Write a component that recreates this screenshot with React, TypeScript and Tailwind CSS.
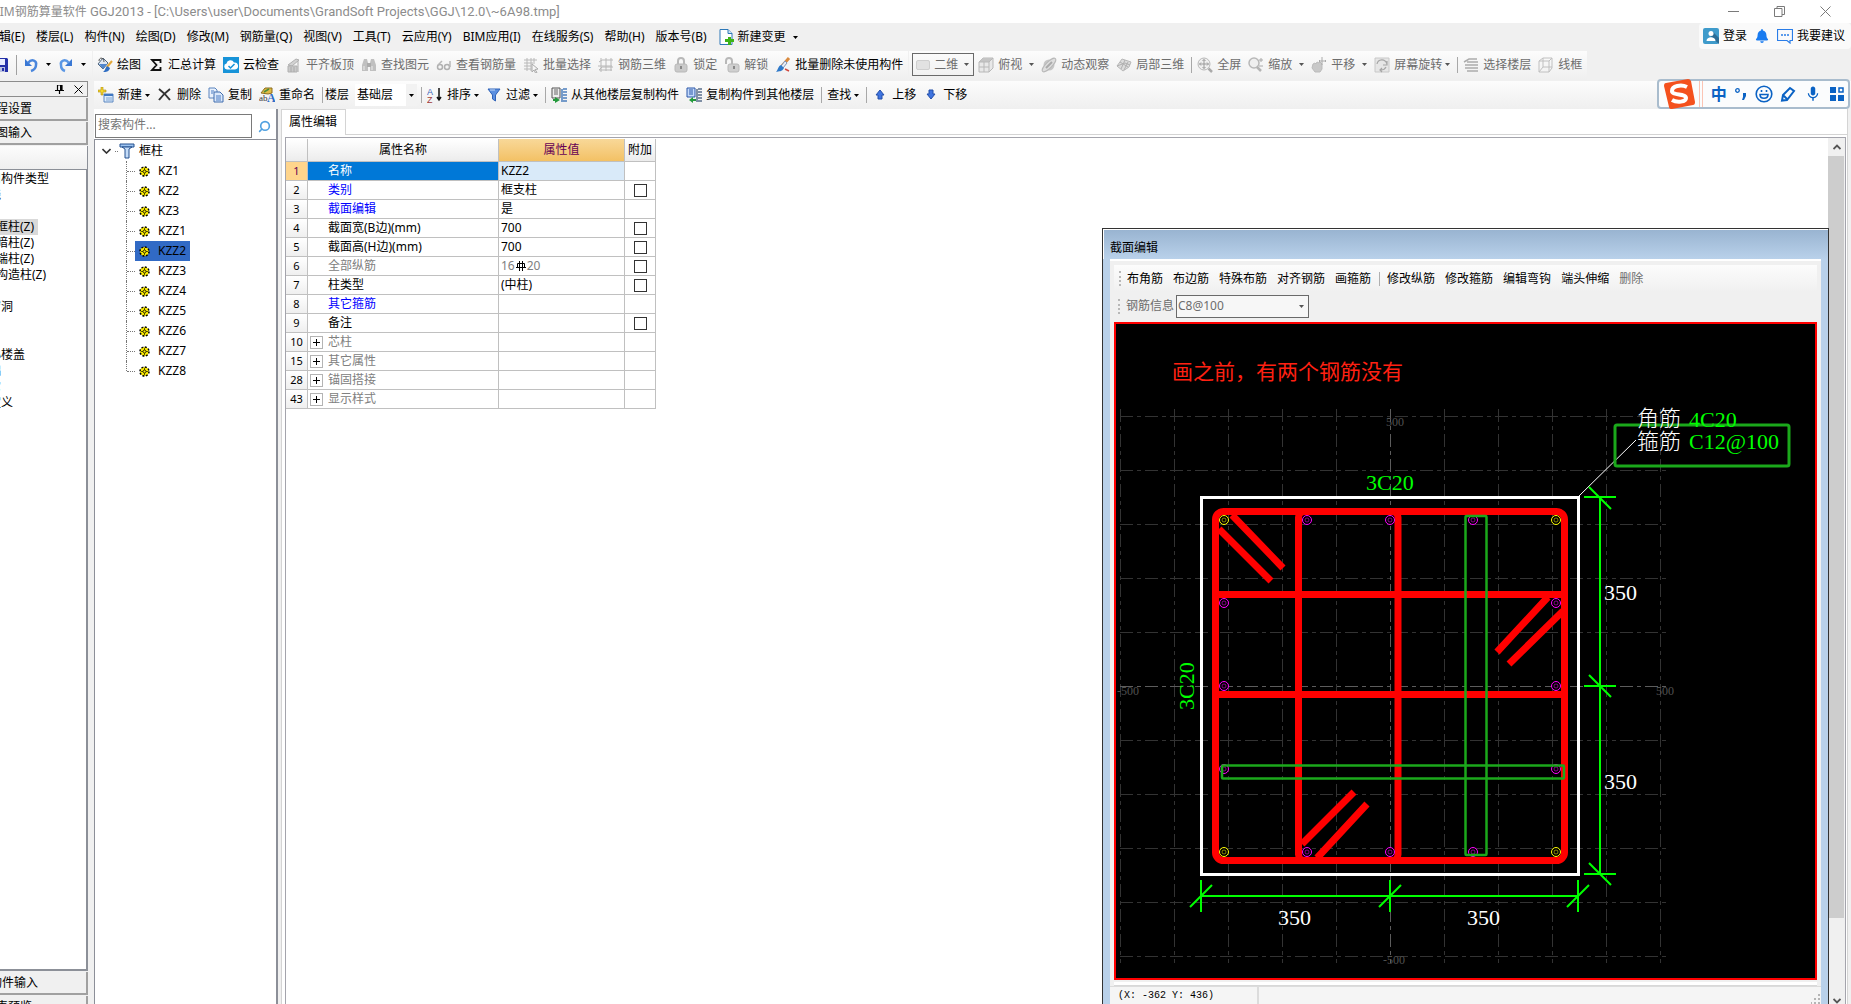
import React from "react";
import clsx from "clsx";
import { FiSearch } from "react-icons/fi";
import { FaBell } from "react-icons/fa";
import { MdMic } from "react-icons/md";

type IconProps = { children: React.ReactNode; size?: number };

const Icon = ({ children, size = 16 }: IconProps) => (
  <svg width={size} height={size} viewBox="0 0 16 16" fill="none" className="shrink-0" aria-hidden="true">
    {children}
  </svg>
);

const icons: Record<string, React.ReactNode> = {
  save: (
    <Icon>
      <path d="M1 1h13l1 1v13H1z" fill="#2430a8" />
      <path d="M4 2h8v6H4z" fill="#e8ecff" />
      <path d="M4 10h8v5H4z" fill="#b9c0e0" />
      <path d="M9 11h2v3H9z" fill="#2430a8" />
    </Icon>
  ),
  undo: (
    <Icon>
      <path d="M2 2v7h7z" fill="#3a78d4" />
      <path d="M5 6C9 1 14 4 13 8c0 3-2 5-5 6" stroke="#4a86dc" strokeWidth="2.500" />
    </Icon>
  ),
  redo: (
    <Icon>
      <path d="M14 2v7H7z" fill="#3a78d4" />
      <path d="M11 6C7 1 2 4 3 8c0 3 1 5 4 6" stroke="#5b97e4" strokeWidth="2.500" />
    </Icon>
  ),
  draw: (
    <Icon>
      <path d="M6 1l5 5-5 6-5-5z" fill="#dfe8f5" stroke="#51677f" />
      <path d="M2 7l4 5 4-5z" fill="#4f86cf" />
      <path d="M2 4c0-4 5-4 5 1" stroke="#555" />
      <path d="M15 4l-5 6" stroke="#e3a73a" strokeWidth="2" />
      <path d="M10 9l3 2c-1 4-4 4-7 4 2-1 2-4 4-6z" fill="#2e6dc2" />
    </Icon>
  ),
  sum: (
    <Icon>
      <path d="M12.500 6V3H4l4.500 5L4 13h8.500v-3" stroke="#111" strokeWidth="1.800" />
    </Icon>
  ),
  cloud: (
    <Icon>
      <path d="M0 0h16v16H0z" fill="#1793d8" />
      <path d="M4 12.500a3 3 0 01-.5-5.900A4 4 0 0111 5.500a3.500 3.500 0 011 7z" fill="#fff" />
      <path d="M5.500 9l2 2 4-4" stroke="#1793d8" strokeWidth="1.500" />
    </Icon>
  ),
  align: (
    <Icon>
      <path d="M2 8l8-6 3 1-7 6z" fill="#d2d2d2" stroke="#b0b0b0" />
      <path d="M2 9h9v6H2z" fill="#c9c9c9" stroke="#b0b0b0" />
      <path d="M5 10v5M8 10v5M12 4v11" stroke="#aaa" />
    </Icon>
  ),
  binoculars: (
    <Icon>
      <path d="M3 2h3l1 4v8H1V8zM10 2h3l2 6v6H9V6z" fill="#c0c0c0" />
      <path d="M6 6h4v4H6z" fill="#acacac" />
      <path d="M3 9v4M11 9v4" stroke="#ececec" />
    </Icon>
  ),
  glasses: (
    <Icon>
      <circle cx="4" cy="10" r="2.500" stroke="#b0b0b0" strokeWidth="1.500" />
      <circle cx="11" cy="10" r="2.500" stroke="#b0b0b0" strokeWidth="1.500" />
      <path d="M2 8l4-4M14 10V4" stroke="#b8b8b8" strokeWidth="1.500" />
    </Icon>
  ),
  select: (
    <Icon>
      <path d="M1 3h13M1 6h9M1 9h7M1 12h7M4 1v13M8 1v13M11 1v6" stroke="#b8b8b8" />
      <path d="M9 7l6 5-3 .5 2 3-1.500.5-1.500-3-2 2z" fill="#f5f5f5" stroke="#aaa" />
    </Icon>
  ),
  mesh: (
    <Icon>
      <path d="M1 5l3-2h11M0 9h14M1 13h13M3 1v14M8 1v13M13 1v13M1 13l3-3h11" stroke="#b8b8b8" />
    </Icon>
  ),
  lock: (
    <Icon>
      <path d="M5 8V4a3 3 0 016 0v4" stroke="#b8b8b8" strokeWidth="2" />
      <rect x="2" y="7" width="12" height="8" rx="2" fill="#cacaca" stroke="#b8b8b8" />
      <path d="M8 9v3" stroke="#888" strokeWidth="2" />
    </Icon>
  ),
  unlock: (
    <Icon>
      <path d="M2 7V4a3 3 0 016 0v3" stroke="#b8b8b8" strokeWidth="2" />
      <rect x="4" y="7" width="11" height="8" rx="2" fill="#cfcfcf" stroke="#b8b8b8" />
      <path d="M10 9v3" stroke="#888" strokeWidth="2" />
    </Icon>
  ),
  brush: (
    <Icon>
      <path d="M14 1L7 9" stroke="#d98a3e" strokeWidth="3" />
      <path d="M10 4L6 9l2 2 4-5z" fill="#e9edf5" stroke="#7f95b8" />
      <path d="M6 8l3 3c-2 4-5 3-8 4 2-2 2-6 5-7z" fill="#2f79c9" />
      <path d="M10 12l4 2" stroke="#d0473d" strokeWidth="1.500" />
    </Icon>
  ),
  cube: (
    <Icon>
      <path d="M1 5l4-4h10v10l-4 4H1z" fill="#e8e8e8" stroke="#b8b8b8" />
      <path d="M1 5l4-4h10l-4 4z" fill="#c4c4c4" />
      <path d="M11 5v10M1 5h10l4-4M6 5v10M1 10h10" stroke="#b8b8b8" />
    </Icon>
  ),
  orbit: (
    <Icon>
      <circle cx="8" cy="8" r="5.500" fill="#c6c6c6" />
      <ellipse cx="8" cy="8" rx="9" ry="3" transform="rotate(-45 8 8)" fill="#dedede" stroke="#b8b8b8" />
      <path d="M5 11l6-6" stroke="#aaa" strokeWidth="2" />
    </Icon>
  ),
  local: (
    <Icon>
      <path d="M1 9l5-7 9 3-2 5-6 4z" fill="#dcdcdc" stroke="#b8b8b8" />
      <path d="M4 5l8 5M9 3l-4 9M12 5l-4 8M1 9l8-3 5 2" stroke="#b0b0b0" />
    </Icon>
  ),
  full: (
    <Icon>
      <circle cx="7" cy="7" r="6" fill="#efefef" stroke="#b8b8b8" />
      <path d="M11.500 11.500L15 15" stroke="#aaa" strokeWidth="2.500" />
      <path d="M7 2.500v9M2.500 7h9M5.500 4L7 2.500 8.500 4M5.500 10L7 11.500 8.500 10M4 5.500L2.500 7 4 8.500M10 5.500L11.500 7 10 8.500" stroke="#999" />
    </Icon>
  ),
  zoom: (
    <Icon>
      <circle cx="6" cy="6" r="5" fill="#efefef" stroke="#b8b8b8" strokeWidth="1.500" />
      <path d="M9 10l4 4" stroke="#b4b4b4" strokeWidth="2.500" />
      <path d="M11 3h4M13 1v4M11 9h4" stroke="#aaa" />
    </Icon>
  ),
  pan: (
    <Icon>
      <path d="M2 7l2-1 1 1 1-2 2 1 1-1 2 2v5l-2 3H4l-3-4z" fill="#c8c8c8" stroke="#bbb" />
      <path d="M11 0v8M8 4h7M9 3L8 4l1 1M14 3l1 1-1 1" stroke="#aaa" />
    </Icon>
  ),
  rotate: (
    <Icon>
      <path d="M1 1h14v14H1z" fill="#e6e6e6" stroke="#c8c8c8" />
      <path d="M3 7c1-5 8-6 10 0M13 4v4h-4M12 10c-1 2-3 3-5 3M8 11l-2 2 2 2" stroke="#a6a6a6" strokeWidth="1.200" />
    </Icon>
  ),
  floors: (
    <Icon>
      <path d="M1 5l5-3h8M4 5h11M4 8h11M4 11h11M4 14h11M2 8h2M2 11h2" stroke="#acacac" strokeWidth="1.500" />
    </Icon>
  ),
  wire: (
    <Icon>
      <path d="M1 4l4-3h9v10l-3 4H1zM1 4h10v11M11 4l3-3M5 1v9h9M5 10l-4 5" stroke="#c0c0c0" />
    </Icon>
  ),
  add: (
    <Icon>
      <path d="M6 7h9v8H6z" fill="#dcebfb" stroke="#5a86c0" />
      <path d="M6 7h9v2H6z" fill="#3f77c2" />
      <path d="M8 11h6M8 13h6" stroke="#7fa4d4" />
      <path d="M3 0h2v3h3v2H5v3H3V5H0V3h3z" fill="#f5d62a" stroke="#ab8b10" strokeWidth=".6" />
    </Icon>
  ),
  remove: (
    <Icon>
      <path d="M2 2c4 3 8 7 11 11M13 2C9 5 5 9 2 13" stroke="#333" strokeWidth="2" />
    </Icon>
  ),
  copy: (
    <Icon>
      <path d="M1 1h6l2 2v8H1z" fill="#e9f1fc" stroke="#5b84be" />
      <path d="M6 5h6l3 3v7H6z" fill="#dbe8fa" stroke="#3e6cae" />
      <path d="M3 4h3M3 6h2M8 9h5M8 11h5M8 13h5" stroke="#4a7cc4" />
    </Icon>
  ),
  rename: (
    <Icon>
      <path d="M2 6l4-5h7v5l-4 1z" fill="#e0bb45" stroke="#8b6d1f" />
      <path d="M5 5l5-3" stroke="#4b8b3b" strokeWidth="1.500" />
      <text x="0" y="14" fontSize="9" fontFamily="Liberation Serif, serif" fill="#333">ab</text>
      <text x="8" y="15" fontSize="12" fontFamily="Liberation Serif, serif" fontWeight="bold" fill="#2c6bc4">A</text>
    </Icon>
  ),
  sort: (
    <Icon>
      <text x="0" y="8" fontSize="9" fontFamily="Liberation Sans, sans-serif" fill="#3a62b8">A</text>
      <text x="0" y="16" fontSize="9" fontFamily="Liberation Sans, sans-serif" fill="#a03a3a">Z</text>
      <path d="M12 1v12M10 10l2 3 2-3" stroke="#111" strokeWidth="1.500" />
    </Icon>
  ),
  filter: (
    <Icon>
      <path d="M2 2h12L9.500 8v6l-3-2V8z" fill="#5b8fe0" stroke="#2f62b8" />
      <path d="M4 3h5" stroke="#c5dbf8" />
    </Icon>
  ),
  copyFrom: (
    <Icon>
      <path d="M1 1h8v10H1z" fill="#eee" stroke="#555" />
      <path d="M3 3h4M3 5h4M3 7h4" stroke="#666" />
      <path d="M12 2h4M12 5h4M12 8h4M12 11h4M12 14h4M11 2v13" stroke="#4b7dbc" strokeWidth="1.500" />
      <path d="M9 13l-5-3v2H2v2h2v2z" fill="#249a3c" />
    </Icon>
  ),
  copyTo: (
    <Icon>
      <path d="M1 1h8v9H1z" fill="#c4dafb" stroke="#2a56a8" />
      <path d="M3 3h4M3 5h4M3 7h4" stroke="#2a56a8" />
      <path d="M12 2h4M12 5h4M12 8h4M12 11h4M12 14h4M11 2v13" stroke="#5a6f8c" strokeWidth="1.500" />
      <path d="M3 13l4-3v2h3v2H7v2z" fill="#249a3c" />
    </Icon>
  ),
  up: (
    <Icon>
      <path d="M8 3l4 5h-2v4H6V8H4z" fill="#3f74e0" stroke="#234ea8" />
    </Icon>
  ),
  down: (
    <Icon>
      <path d="M8 12l4-5h-2V3H6v4H4z" fill="#3f74e0" stroke="#234ea8" />
    </Icon>
  ),
  newChange: (
    <Icon>
      <path d="M2 .5h8l4 4v11H2z" fill="#fff" stroke="#2e78b8" />
      <path d="M10 .5v4h4" fill="#cfe4f5" stroke="#2e78b8" />
      <path d="M10 8h3v2h3v3h-3v3h-3v-3H7v-3h3z" fill="#3db316" />
    </Icon>
  ),
  user: (
    <Icon>
      <rect width="16" height="16" rx="2" fill="#3f9bcb" />
      <path d="M8 9l8 7v-6L10 4z" fill="#2c6d96" />
      <circle cx="8" cy="5.500" r="2.500" fill="#fff" />
      <path d="M3.500 13c0-5 9-5 9 0z" fill="#fff" />
    </Icon>
  ),
  chat: (
    <Icon>
      <path d="M.5 1.500h15v11H13V15l-3-2.500H.5z" stroke="#2a7de8" strokeWidth="1.200" />
      <path d="M4 7h2M7 7h2M10 7h2" stroke="#2a7de8" strokeWidth="1.500" />
    </Icon>
  ),
  column: (
    <Icon>
      <path d="M1 1h14v3H1z" fill="#9cc3f0" stroke="#24508f" />
      <path d="M3 4h10l-3 2v9H6V6z" fill="#c4dcf8" stroke="#24508f" />
    </Icon>
  ),
};

const Caret = ({ gray }: { gray?: boolean }) => (
  <svg width="5" height="3" viewBox="0 0 5 3" className="shrink-0" aria-hidden="true">
    <path d="M0 0h5L2.500 3z" fill={gray ? "#555" : "#000"} />
  </svg>
);

type ToolProps = { icon?: string; label: string; disabled?: boolean; caret?: "near" | "far" };

const Tool = ({ icon, label, disabled, caret }: ToolProps) => (
  <button
    className={clsx(
      "flex shrink-0 items-center whitespace-nowrap",
      caret === "far" ? "gap-[7px]" : "gap-[3px]",
      disabled ? "text-[#6d6d6d]" : "text-black"
    )}
  >
    <span className="flex items-center gap-1">
      {icon && icons[icon]}
      {label}
    </span>
    {caret && <Caret gray={disabled} />}
  </button>
);

const Group = ({ children, first }: { children: React.ReactNode; first?: boolean }) => (
  <div className={clsx("flex h-4 shrink-0 items-center gap-[7px]", !first && "border-l border-[#a8a8a8] pl-[5px]")}>
    {children}
  </div>
);

const menus = [
  "编辑(E)", "楼层(L)", "构件(N)", "绘图(D)", "修改(M)", "钢筋量(Q)", "视图(V)", "工具(T)",
  "云应用(Y)", "BIM应用(I)", "在线服务(S)", "帮助(H)", "版本号(B)",
];

const TitleBar = () => (
  <div className="flex h-[23px] shrink-0 items-center justify-between bg-white text-[#8c8c8c]">
    <div className="-ml-2 whitespace-nowrap">
      BIM钢筋算量软件{" "}
      <span className="font-[Roboto,sans-serif] text-[13px]">GGJ2013 - [C:\Users\user\Documents\GrandSoft Projects\GGJ\12.0\~6A98.tmp]</span>
    </div>
    <div className="flex items-center gap-[35px] pr-5 text-[#7a7a7a]">
      <button aria-label="Minimize">
        <svg width="11" height="11" viewBox="0 0 11 11" fill="none"><path d="M0 5.500h11" stroke="currentColor" /></svg>
      </button>
      <button aria-label="Restore">
        <svg width="11" height="11" viewBox="0 0 11 11" fill="none">
          <path d="M.5 2.500h7.500v8H.5zM3 2.500v-2h7.500v8H8" stroke="currentColor" />
        </svg>
      </button>
      <button aria-label="Close">
        <svg width="11" height="11" viewBox="0 0 11 11" fill="none"><path d="M.5.5l10 10M10.500.5l-10 10" stroke="currentColor" /></svg>
      </button>
    </div>
  </div>
);

const MenuBar = () => (
  <div className="flex h-7 shrink-0 items-start justify-between">
    <div className="-ml-[13px] flex h-7 items-center gap-[11px]">
      {menus.map((m) => (
        <button key={m} className="whitespace-nowrap">{m}</button>
      ))}
      <Tool icon="newChange" label="新建变更" caret="far" />
    </div>
    <div className="flex h-[26px] items-center gap-2 rounded bg-[#fafafa] pr-1.5 pl-1">
      <Tool icon="user" label="登录" />
      <button aria-label="通知" className="text-[#1a7cf0]"><FaBell size={14} /></button>
      <Tool icon="chat" label="我要建议" />
    </div>
  </div>
);

const ViewToolbar = () => (
  <div className="flex h-[29px] shrink-0 *:pb-0.5">
    <div className="flex w-[92px] shrink-0 items-center bg-linear-to-b from-[#fcfcfc] to-[#efefef]">
      <button aria-label="保存" className="-ml-[7px]">{icons.save}</button>
      <div className="ml-[7px] h-5 w-px bg-[#a0a0a0]" />
      <div className="ml-1.5 flex items-center gap-[7px]">
        <button aria-label="撤销">{icons.undo}</button>
        <Caret />
        <button aria-label="恢复">{icons.redo}</button>
        <Caret />
      </div>
    </div>
    <div className="ml-px flex shrink-0 items-center gap-[7px] bg-linear-to-b from-[#fcfcfc] to-[#efefef] pr-[5px] pl-1">
      <Tool icon="draw" label="绘图" />
      <Tool icon="sum" label="汇总计算" />
      <Tool icon="cloud" label="云检查" />
      <Tool icon="align" label="平齐板顶" disabled />
      <Tool icon="binoculars" label="查找图元" disabled />
      <Tool icon="glasses" label="查看钢筋量" disabled />
      <Tool icon="select" label="批量选择" disabled />
      <Tool icon="mesh" label="钢筋三维" disabled />
      <Tool icon="lock" label="锁定" disabled />
      <Tool icon="unlock" label="解锁" disabled />
      <Tool icon="brush" label="批量删除未使用构件" />
    </div>
    <div className="ml-px flex shrink-0 items-center gap-[7px] bg-linear-to-b from-[#fcfcfc] to-[#efefef] pr-[5px] pl-[3px]">
      <div className="-mr-[3px] flex h-[23px] w-[62px] items-center border border-[#6a6a6a] pr-1 pl-[3px] text-[#6d6d6d]">
        <span className="h-2.5 w-3.5 shrink-0 rounded-xs border border-[#cfcfcf] bg-[#e2e2e2]" />
        <select aria-label="视图模式" className="ml-1 min-w-0 flex-1 appearance-none bg-transparent">
          <option>二维</option>
        </select>
        <Caret gray />
      </div>
      <Group first>
        <Tool icon="cube" label="俯视" disabled caret="far" />
        <Tool icon="orbit" label="动态观察" disabled />
        <Tool icon="local" label="局部三维" disabled />
      </Group>
      <Group>
        <Tool icon="full" label="全屏" disabled />
        <Tool icon="zoom" label="缩放" disabled caret="far" />
        <Tool icon="pan" label="平移" disabled caret="far" />
        <Tool icon="rotate" label="屏幕旋转" disabled caret="near" />
      </Group>
      <Group>
        <Tool icon="floors" label="选择楼层" disabled />
        <Tool icon="wire" label="线框" disabled />
      </Group>
    </div>
  </div>
);

const ComponentToolbar = () => (
  <div className="flex h-7 shrink-0 items-center gap-[7px] bg-linear-to-b from-[#fcfcfc] to-[#efefef] pl-1">
    <Group first>
      <Tool icon="add" label="新建" caret="near" />
      <Tool icon="remove" label="删除" />
      <Tool icon="copy" label="复制" />
      <Tool icon="rename" label="重命名" />
    </Group>
    <div className="flex h-4 items-center border-l border-[#a8a8a8] pl-[2px]">
      <label htmlFor="floor">楼层</label>
      <div className="-mr-[3px] ml-1.5 flex h-[22px] w-[62px] items-center bg-white pl-[2px]">
        <select id="floor" className="min-w-0 flex-1 appearance-none bg-transparent">
          <option>基础层</option>
        </select>
        <span className="flex h-full w-[11px] items-center justify-center bg-[#f2f2f2]"><Caret /></span>
      </div>
    </div>
    <Group>
      <Tool icon="sort" label="排序" caret="near" />
      <Tool icon="filter" label="过滤" caret="near" />
    </Group>
    <Group>
      <Tool icon="copyFrom" label="从其他楼层复制构件" />
      <Tool icon="copyTo" label="复制构件到其他楼层" />
    </Group>
    <Group>
      <Tool label="查找" caret="near" />
    </Group>
    <Group>
      <Tool icon="up" label="上移" />
      <Tool icon="down" label="下移" />
    </Group>
  </div>
);

const ImeBar = () => (
  <div className="absolute top-[79px] right-px flex h-[30px] w-[193px] items-center justify-between rounded-sm border-2 border-[#a9bccd] bg-[#fbfcfd] pr-1 pl-1 text-[#0a62c4]">
    <div className="flex items-center gap-1">
      <svg width="32" height="30" viewBox="0 0 32 30" aria-hidden="true">
        <path d="M3 4L25 0q2 0 3 2l4 21q0 3-2 3L9 30q-3 0-3-2L1 7q0-3 2-3z" fill="#f4511e" />
        <path d="M24 8C18 5 9 7 9 12c0 5 14 2 14 7 0 4-9 5-14 2" fill="none" stroke="#fff" strokeWidth="4" />
      </svg>
      <div className="h-[26px] w-1 border-x border-[#fbc4b4]" />
    </div>
    <span className="text-base leading-4 font-bold">中</span>
    <svg width="12" height="14" viewBox="0 0 12 14" fill="none" aria-hidden="true">
      <circle cx="2.500" cy="3.500" r="1.800" stroke="currentColor" strokeWidth="1.300" />
      <path d="M8 6h3v3l-2 4H7l1-3z" fill="currentColor" />
    </svg>
    <svg width="18" height="18" viewBox="0 0 18 18" fill="none" stroke="currentColor" strokeWidth="1.600" aria-hidden="true">
      <circle cx="9" cy="9" r="7.800" />
      <path d="M5 9.500c0 5 8 5 8 0zM6.500 5v2M11.500 5v2" />
    </svg>
    <svg width="16" height="16" viewBox="0 0 16 16" fill="none" stroke="currentColor" strokeWidth="2" aria-hidden="true">
      <path d="M10 2l4 3-7 9-5 .5L3 9zM3 9l4 4" />
    </svg>
    <MdMic size={18} />
    <svg width="14" height="14" viewBox="0 0 14 14" fill="currentColor" aria-hidden="true">
      <path d="M0 0h6v6H0zM0 8h6v6H0zM8 8h6v6H8z" />
      <path d="M9 1h4v4H9z" fill="none" stroke="currentColor" strokeWidth="1.500" />
    </svg>
  </div>
);

const modules: { label: string; child?: boolean; active?: boolean }[] = [
  { label: "常用构件类型" },
  { label: "轴线" },
  { label: "柱" },
  { label: "框柱(Z)", child: true, active: true },
  { label: "暗柱(Z)", child: true },
  { label: "端柱(Z)", child: true },
  { label: "构造柱(Z)", child: true },
  { label: "墙" },
  { label: "门窗洞" },
  { label: "梁" },
  { label: "板" },
  { label: "空心楼盖" },
  { label: "基础" },
  { label: "其它" },
  { label: "自定义" },
];

const DockButton = ({ label }: { label: string }) => (
  <button className="mt-px h-[23px] shrink-0 border-r-2 border-b-2 border-[#a0a0a0] bg-[#f0f0f0] text-center">{label}</button>
);

const ModuleDock = () => (
  <div className="flex w-[88px] shrink-0 justify-end overflow-hidden">
    <div className="flex w-[158px] shrink-0 flex-col">
      <div className="flex h-4 shrink-0 items-center justify-end gap-2.5 border border-[#8c8c8c] pr-1">
        <button aria-label="固定">
          <svg width="9" height="9" viewBox="0 0 9 9" fill="none">
            <path d="M2 0h5v5M0 5.500h9M4.500 6v3M2.500 0v5" stroke="#000" strokeWidth="1.200" />
            <path d="M5 0h2v5H5z" fill="#000" />
          </svg>
        </button>
        <button aria-label="关闭">
          <svg width="9" height="9" viewBox="0 0 9 9" fill="none"><path d="M.5.5l8 8M8.500.5l-8 8" stroke="#000" /></svg>
        </button>
      </div>
      <DockButton label="工程设置" />
      <DockButton label="绘图输入" />
      <div className="mt-px h-6 shrink-0 border-r border-b border-[#8c9098] bg-linear-to-b from-[#fcfcfc] to-[#efefef]" />
      <ul className="min-h-0 flex-1 border-r-2 border-b-2 border-[#8c9098] bg-white pt-px">
        {modules.map((m) => (
          <li key={m.label} className={clsx("flex h-4 items-center", m.child ? "pl-[66px]" : "pl-[47px]")}>
            <button className={clsx("h-4 leading-4 whitespace-nowrap", m.active && "bg-[#d9d9d9] pr-1")}>{m.label}</button>
          </li>
        ))}
      </ul>
      <DockButton label="单构件输入" />
      <DockButton label="报表预览" />
      <div className="-mb-4 h-px shrink-0" />
    </div>
  </div>
);

const members = ["KZ1", "KZ2", "KZ3", "KZZ1", "KZZ2", "KZZ3", "KZZ4", "KZZ5", "KZZ6", "KZZ7", "KZZ8"];

const Gear = () => (
  <svg width="11" height="11" viewBox="0 0 11 11" className="shrink-0" aria-hidden="true">
    <circle cx="5.500" cy="5.500" r="4.500" fill="#ffee00" stroke="#000" strokeWidth="1.500" strokeDasharray="2 1.500" />
    <path d="M5.500 2v7M2 5.500h7" stroke="#3a3a00" strokeWidth=".8" />
    <circle cx="5.500" cy="5.500" r="1.500" fill="#ffee00" stroke="#000" strokeWidth=".8" />
  </svg>
);

const MemberPanel = () => (
  <div className="flex w-[184px] shrink-0 flex-col border-r-2 border-[#8c8f98] bg-white">
    <div className="flex h-[30px] shrink-0 items-center pt-1 pl-px">
      <input
        aria-label="搜索构件"
        placeholder="搜索构件..."
        className="h-6 w-[157px] border border-[#7a7a7a] px-[2px] pb-[3px] placeholder:text-[#757575]"
      />
      <button aria-label="搜索" className="ml-1.5 -scale-x-100 text-[#4fa0e0]"><FiSearch size={13} strokeWidth={3} /></button>
    </div>
    <div className="flex-1 border-t border-l border-[#8c8f98] pt-px">
      <button className="flex h-5 items-center pl-[7px]">
        <svg width="9" height="6" viewBox="0 0 9 6" fill="none"><path d="M.5 1l4 4 4-4" stroke="#333" strokeWidth="1.600" /></svg>
        <span className="mr-px ml-1 w-[3px] border-t border-dotted border-[#777]" />
        {icons.column}
        <span className="ml-1">框柱</span>
      </button>
      <ul className="ml-[31px]">
        {members.map((name, i) => (
          <li key={name} className="flex h-5">
            <span className={clsx("border-l border-dotted border-[#777]", i === members.length - 1 ? "h-2.5" : "h-5")} />
            <span className="mt-2.5 h-0 w-[8px] border-t border-dotted border-[#777]" />
            <button className={clsx("flex h-5 items-center gap-2 px-1", name === "KZZ2" && "bg-[#316ac5]")}>
              <Gear />
              {name}
            </button>
          </li>
        ))}
      </ul>
    </div>
  </div>
);

type Prop = { no: number; name: string; value?: React.ReactNode; tone?: "blue" | "gray"; check?: boolean; group?: boolean };

const props: Prop[] = [
  { no: 1, name: "名称", value: "KZZ2" },
  { no: 2, name: "类别", value: "框支柱", tone: "blue", check: true },
  { no: 3, name: "截面编辑", value: "是", tone: "blue" },
  { no: 4, name: "截面宽(B边)(mm)", value: "700", check: true },
  { no: 5, name: "截面高(H边)(mm)", value: "700", check: true },
  {
    no: 6,
    name: "全部纵筋",
    tone: "gray",
    check: true,
    value: (
      <span className="flex items-center gap-px text-[#808080]">
        16
        <svg width="10" height="10" viewBox="0 0 10 10" fill="none" aria-label="C">
          <path d="M1.500 2.500h7v4h-7zM0 6.500h10M3.500 0v10M6.500 0v10" stroke="#000" />
        </svg>
        20
      </span>
    ),
  },
  { no: 7, name: "柱类型", value: "(中柱)", check: true },
  { no: 8, name: "其它箍筋", tone: "blue" },
  { no: 9, name: "备注", check: true },
  { no: 10, name: "芯柱", tone: "gray", group: true },
  { no: 15, name: "其它属性", tone: "gray", group: true },
  { no: 28, name: "锚固搭接", tone: "gray", group: true },
  { no: 43, name: "显示样式", tone: "gray", group: true },
];

const PropertyTable = () => (
  <table className="mt-px w-[370px] table-fixed border-separate border-spacing-0 self-start leading-4">
    <colgroup>
      <col className="w-[22px]" />
      <col className="w-[191px]" />
      <col className="w-[126px]" />
      <col className="w-[31px]" />
    </colgroup>
    <thead>
      <tr className="[&>th]:h-[23px] [&>th]:border-r [&>th]:border-b [&>th]:border-[#c0c0c0] [&>th]:p-0 [&>th]:font-normal">
        <th className="bg-linear-to-b from-white to-[#ececec]" />
        <th className="bg-linear-to-b from-white to-[#ececec]">属性名称</th>
        <th className="bg-linear-to-b from-[#f8d898] to-[#f3c164] text-[#660055]">属性值</th>
        <th className="bg-linear-to-b from-white to-[#ececec] whitespace-nowrap">附加</th>
      </tr>
    </thead>
    <tbody>
      {props.map((p) => {
        const current = p.no === 1;
        return (
          <tr key={p.no} className="[&>td]:h-[19px] [&>td]:border-r [&>td]:border-b [&>td]:border-[#c0c0c0] [&>td]:p-0">
            <td
              className={clsx(
                "text-center text-[11px]",
                current ? "bg-[#ffd58c] text-[#660055]" : "bg-linear-to-b from-white to-[#efefef]"
              )}
            >
              {p.no}
            </td>
            <td
              className={clsx(
                current && "bg-[#0078d7] text-white",
                p.tone === "blue" && "text-[#0000ff]",
                p.tone === "gray" && "text-[#808080]"
              )}
            >
              <div className="flex h-[18px] items-center gap-[5px] pl-[2px]">
                {p.group ? (
                  <button aria-label={"展开" + p.name} className="flex size-[13px] items-center justify-center border border-[#b4b4b4]">
                    <svg width="7" height="7" viewBox="0 0 7 7"><path d="M0 3.500h7M3.500 0v7" stroke="#000" /></svg>
                  </button>
                ) : (
                  <span className="size-[13px]" />
                )}
                {p.name}
              </div>
            </td>
            <td className={clsx(current && "bg-[#d9eaf9]")}>
              <div className="pl-[2px]">{p.value}</div>
            </td>
            <td>
              {p.check && (
                <input
                  type="checkbox"
                  aria-label={p.name + "附加"}
                  className="mx-auto block size-[13px] appearance-none border border-[#333] bg-white"
                />
              )}
            </td>
          </tr>
        );
      })}
    </tbody>
  </table>
);

const gridSteps = [-5, -4, -3, -2, -1, 0, 1, 2, 3, 4, 5];

const bars: [number, number, string][] = [
  [109, 199, "#ffff00"], [441, 199, "#ffff00"], [109, 531, "#ffff00"], [441, 531, "#ffff00"],
  [192, 199, "#ff00ff"], [275, 199, "#ff00ff"], [358, 199, "#ff00ff"],
  [192, 531, "#ff00ff"], [275, 531, "#ff00ff"], [358, 531, "#ff00ff"],
  [109, 282, "#ff00ff"], [109, 365, "#ff00ff"], [109, 448, "#ff00ff"],
  [441, 282, "#ff00ff"], [441, 365, "#ff00ff"], [441, 448, "#ff00ff"],
];

const SectionDrawing = () => (
  <svg width="698" height="654" viewBox="1 3 698 654" fill="none" className="shrink-0" fontFamily="Liberation Serif, Noto Sans CJK SC, serif">
    {gridSteps.map((n) => (
      <g key={n} stroke={n === 0 ? "#5c5c5c" : "#333"} shapeRendering="crispEdges">
        <path d={`M${275.5 + n * 54} 88V642`} strokeDasharray="13 4 4 4" />
        <path d={`M5 ${365.5 + n * 54}H553`} strokeDasharray="13 4 4 4" />
      </g>
    ))}
    <g fill="#505050" fontSize="12">
      <text x="271" y="105">500</text>
      <text x="2" y="374">-500</text>
      <text x="541" y="374">500</text>
      <text x="268" y="643">-500</text>
    </g>

    <path d="M464 175L521 119" stroke="#fff" />
    <rect x="86.500" y="176.500" width="377" height="377" stroke="#fff" strokeWidth="3" />

    <g stroke="#ff0000" strokeWidth="7">
      <rect x="100.500" y="190.500" width="349" height="349" rx="8" />
      <rect x="183.500" y="190.500" width="99.500" height="349" rx="6" />
      <rect x="100.500" y="273.500" width="349" height="100" rx="4" />
      <path d="M117 194l51 53M104 208l52 52M433 276l-51 55M448 290l-54 53M187 523l52-52M202 537l50-54" />
    </g>
    {bars.map(([x, y, color]) => (
      <g key={`${x}-${y}`} stroke={color}>
        <circle cx={x} cy={y} r="4.500" fill="#000" />
        <circle cx={x} cy={y} r="2" opacity=".5" />
      </g>
    ))}

    <g stroke="#1ba81b">
      <rect x="350.500" y="195" width="21" height="339" rx="1" strokeWidth="2.500" />
      <rect x="107" y="444.500" width="342" height="13" rx="1" strokeWidth="2.500" />
      <rect x="500" y="104" width="174" height="41" rx="2" strokeWidth="3" />
    </g>

    <g stroke="#00ff00" strokeWidth="2">
      <path d="M485 176V553M469 176h32M469 365h32M469 553h32M474 166l22 22M474 354l22 22M474 542l22 22" />
      <path d="M86 575H463M86 559v32M275 559v32M463 559v32M75 586l22-22M264 586l22-22M452 586l22-22" />
    </g>

    <g fontSize="22" fill="#00ff00">
      <text x="251" y="169">3C20</text>
      <text transform="translate(79 389) rotate(-90)">3C20</text>
      <text x="574" y="106">4C20</text>
      <text x="574" y="128">C12@100</text>
    </g>
    <g fontSize="22" fill="#fff" fontWeight="300">
      <text x="522" y="105">角筋</text>
      <text x="522" y="128">箍筋</text>
      <text x="489" y="279">350</text>
      <text x="489" y="468">350</text>
      <text x="163" y="604">350</text>
      <text x="352" y="604">350</text>
    </g>
    <text x="57" y="58" fontSize="21" fill="#ff2012" fontFamily="Noto Sans CJK SC, sans-serif">画之前，有两个钢筋没有</text>
  </svg>
);

const Grip = () => <span className="h-[15px] w-0 border-l-2 border-dotted border-[#b8b8b8]" />;

const SectionEditor = () => (
  <div className="absolute top-[90px] right-4 bottom-0 flex w-[727px] flex-col overflow-hidden border border-b-0 border-[#333] bg-[#b9d1ea]">
    <div className="flex h-[30px] shrink-0 items-center border-t border-l border-white bg-linear-to-b from-[#99b4d1] to-[#b9d1ea] pt-1.5 pl-1.5">截面编辑</div>
    <div className="mx-[7px] flex shrink-0 flex-col border-t-2 border-white bg-[#f0f0f0] px-[4px] pt-1">
      <div className="flex h-[27px] items-center gap-[10px] bg-linear-to-b from-[#fcfcfc] to-[#f0f0f0] pl-[5px]">
        <Grip />
        <div className="-ml-1 flex h-[14px] items-center gap-[10px] pr-[8px]">
          {["布角筋", "布边筋", "特殊布筋", "对齐钢筋", "画箍筋"].map((t) => (
            <button key={t}>{t}</button>
          ))}
        </div>
        <div className="-ml-[10px] flex h-[14px] items-center gap-[10px] border-l border-[#b0b0b0] pl-[7px]">
          {["修改纵筋", "修改箍筋", "编辑弯钩", "端头伸缩"].map((t) => (
            <button key={t}>{t}</button>
          ))}
          <button disabled className="text-[#6d6d6d]">删除</button>
        </div>
      </div>
      <div className="mb-[2px] flex h-7 items-center gap-[2px] pl-1 text-[#6d6d6d]">
        <Grip />
        <label htmlFor="rebar" className="ml-1">钢筋信息</label>
        <div className="flex h-[23px] w-[133px] items-center border border-[#6a6a6a] bg-[#f7f7f7] pr-1 pl-px">
          <select id="rebar" className="min-w-0 flex-1 appearance-none bg-transparent">
            <option>C8@100</option>
          </select>
          <Caret gray />
        </div>
      </div>
      <div className="flex h-[658px] overflow-hidden border-2 border-[#ff0000] bg-black">
        <SectionDrawing />
      </div>
      <div className="mt-[2px] h-1 border-b border-[#d8d8d8] bg-white" />
    </div>
    <div className="mx-[7px] flex flex-1 items-center bg-[#f5f5f5] font-['Liberation_Mono',monospace] text-[10px]">
      <div className="flex h-full w-[149px] items-center border-t border-r-2 border-[#dcdcdc] pl-2 whitespace-nowrap">(X: -362 Y: 436)</div>
      <div className="flex h-full flex-1 items-end justify-end border-t border-[#dcdcdc]">
        <svg width="10" height="10" viewBox="0 0 10 10" fill="#b5b5b5" aria-hidden="true">
          <path d="M7 0h2v2H7zM7 4h2v2H7zM7 8h2v2H7zM3 4h2v2H3zM3 8h2v2H3zM0 8h1v2H0z" />
        </svg>
      </div>
    </div>
  </div>
);

const PropertyPanel = () => (
  <div className="mr-[3px] ml-[3px] flex min-w-0 flex-1 flex-col border-x border-[#d4d4d4] bg-white">
    <div className="flex h-[26px] shrink-0">
      <button className="w-16 shrink-0 border-t border-r border-[#d4d4d4] pr-px pb-0.5">属性编辑</button>
      <div className="flex-1 border-b border-[#d4d4d4]" />
    </div>
    <div className="relative mt-[2px] mr-px ml-[3px] flex min-h-0 flex-1 justify-between border-x border-t border-[#a4a4ac]">
      <PropertyTable />
      <div className="flex w-[17px] flex-col items-center bg-[#f0f0f0]">
        <button aria-label="向上滚动" className="flex h-[18px] items-center">
          <svg width="8" height="6" viewBox="0 0 8 6" fill="none"><path d="M.5 5L4 1.500 7.500 5" stroke="#555" strokeWidth="1.800" /></svg>
        </button>
        <div className="mr-px h-[88%] w-4 bg-[#cdcdcd]" />
        <button aria-label="向下滚动" className="mt-auto flex">
          <svg width="8" height="6" viewBox="0 0 8 6" fill="none"><path d="M.5 1L4 4.500 7.500 1" stroke="#555" strokeWidth="1.800" /></svg>
        </button>
      </div>
      <SectionEditor />
    </div>
  </div>
);

const App = () => {
  return (
    <div className="relative flex h-screen flex-col overflow-hidden bg-[#f0f0f0] font-['Noto_Sans','Noto_Sans_CJK_SC',sans-serif] text-xs text-black">
      <TitleBar />
      <MenuBar />
      <ViewToolbar />
      <div className="mt-px flex min-h-0 flex-1">
        <ModuleDock />
        <div className="ml-1.5 flex min-w-0 flex-1 flex-col">
          <ComponentToolbar />
          <div className="flex min-h-0 flex-1">
            <MemberPanel />
            <PropertyPanel />
          </div>
        </div>
      </div>
      <ImeBar />
    </div>
  );
};

export default App;
